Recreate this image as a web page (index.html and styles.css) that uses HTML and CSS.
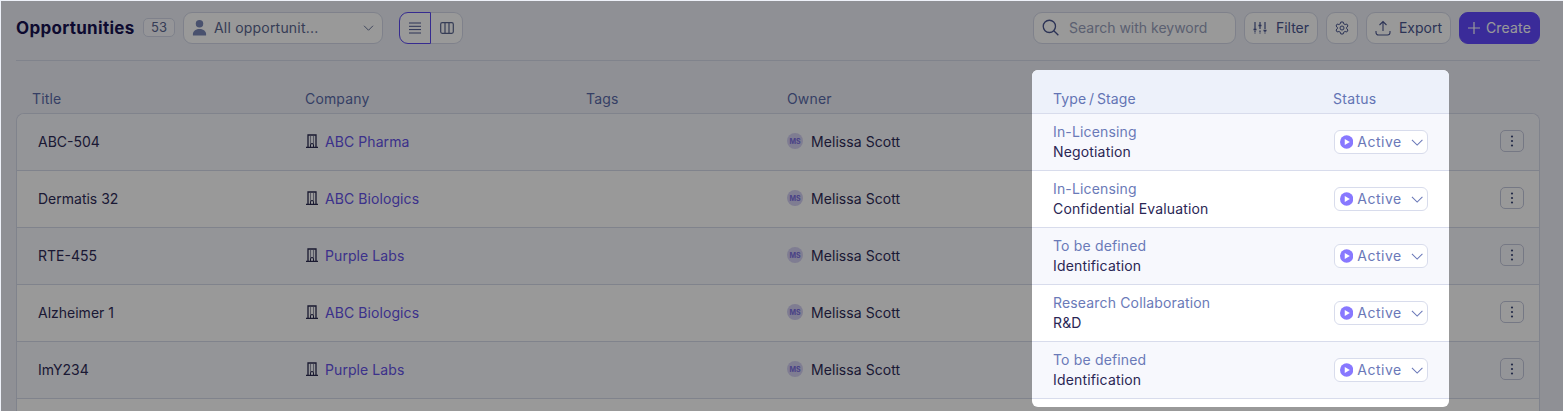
FILE: index.html
```html
<!DOCTYPE html>
<html lang="en">
<head>
<meta charset="utf-8">
<title>Opportunities</title>
<link rel="stylesheet" href="styles.css">
</head>
<body>
<svg class="sprites" width="0" height="0" aria-hidden="true">
  <symbol id="chev" viewBox="0 0 14 8"><path d="M1 1l6 6 6-6" fill="none" stroke="currentColor" stroke-width="1.2"/></symbol>
  <symbol id="bld" viewBox="0 0 12 14"><path d="M2 13V1h8v12M0 13.3h12" fill="none" stroke="currentColor" stroke-width="1.3"/><path d="M4 3h1M7 3h1M4 5h1M7 5h1M4 7h1M7 7h1M4 9h1M7 9h1" stroke="currentColor" stroke-width="1.1"/><path d="M4.5 13v-2a1.5 1.5 0 0 1 3 0v2" fill="none" stroke="currentColor"/></symbol>
  <symbol id="kebab" viewBox="0 0 4 12"><circle cx="2" cy="1.5" r="1.1" fill="currentColor"/><circle cx="2" cy="6" r="1.1" fill="currentColor"/><circle cx="2" cy="10.500" r="1.1" fill="currentColor"/></symbol>
  <symbol id="play" viewBox="0 0 14 14"><circle cx="7" cy="7" r="7" fill="#8878ff"/><path d="M5 3.800v6.400L10.400 7z" fill="#fff"/></symbol>
</svg>
<div class="page">
  <header class="toolbar">
    <h1 class="title">Opportunities</h1>
    <span class="count">53</span>
    <div class="select">
      <svg class="person" viewBox="0 0 16 18"><circle cx="8" cy="4.500" r="4"/><path d="M1 17c-.6-4.500 2.500-7 7-7s7.600 2.500 7 7z"/></svg>
      <span class="select-text">All opportunit...</span>
      <svg class="select-chev"><use href="#chev"/></svg>
    </div>
    <div class="toggle">
      <button class="toggle-btn on"><svg viewBox="0 0 14 12" class="tico"><path d="M1 1h12M1 4.300h12M1 7.600h12M1 11h12" stroke="currentColor" fill="none"/></svg></button>
      <button class="toggle-btn"><svg viewBox="0 0 14 12" class="tico"><rect x=".7" y=".7" width="12.600" height="10.600" rx="1.500" fill="none" stroke="currentColor" stroke-width="1.200"/><path d="M5 1v10M9 1v10" stroke="currentColor" stroke-width="1.200"/></svg></button>
    </div>
    <div class="spacer"></div>
    <div class="search">
      <svg class="search-ico" viewBox="0 0 18 18"><circle cx="7.800" cy="7.800" r="6.500" fill="none" stroke="currentColor" stroke-width="1.400"/><path d="M12.500 12.500l4.800 4.800" stroke="currentColor" stroke-width="1.400"/></svg>
      <span>Search with keyword</span>
    </div>
    <button class="btn filter"><svg class="ico" viewBox="0 0 14 14"><path d="M2 1v12M7 1v12M12 1v12" stroke="currentColor" stroke-width="1.200" stroke-dasharray="7 1.500 2 1"/><path d="M.5 8.500h3M5.500 4.500h3M10.500 9.500h3" stroke="currentColor" stroke-width="1.400"/></svg>Filter</button>
    <button class="btn gear"><svg class="ico" viewBox="0 0 14 14"><path d="M5.800 1h2.400l.4 1.700 1.500.8 1.700-.5 1.200 2-1.300 1.200v1.600L13 9l-1.200 2-1.700-.5-1.500.8-.4 1.700H5.800l-.4-1.700-1.500-.8-1.700.5L1 9l1.300-1.200V6.200L1 5l1.200-2 1.700.5 1.500-.8z" fill="none" stroke="currentColor"/><circle cx="7" cy="7" r="2" fill="none" stroke="currentColor"/></svg></button>
    <button class="btn export"><svg class="ico" viewBox="0 0 16 16"><path d="M8 11V2M4.500 5L8 1.500 11.500 5M1 11v1.500A2.500 2.500 0 0 0 3.500 15h9a2.500 2.500 0 0 0 2.500-2.500V11" fill="none" stroke="currentColor" stroke-width="1.100"/></svg>Export</button>
    <button class="btn create"><svg class="plus" viewBox="0 0 12 12"><path d="M6 0v12M0 6h12" stroke="currentColor" stroke-width="1.200"/></svg>Create</button>
  </header>

  <div class="cols">
    <span>Title</span><span>Company</span><span>Tags</span><span>Owner</span>
  </div>

  <section class="table">
    <div class="row"><span class="c-title">ABC-504</span><span class="c-company"><svg class="bld"><use href="#bld"/></svg><a>ABC Pharma</a></span><span class="c-tags"></span><span class="c-owner"><i class="av">MS</i>Melissa Scott</span><span class="kebab"><svg><use href="#kebab"/></svg></span></div>
    <div class="row"><span class="c-title">Dermatis 32</span><span class="c-company"><svg class="bld"><use href="#bld"/></svg><a>ABC Biologics</a></span><span class="c-tags"></span><span class="c-owner"><i class="av">MS</i>Melissa Scott</span><span class="kebab"><svg><use href="#kebab"/></svg></span></div>
    <div class="row"><span class="c-title">RTE-455</span><span class="c-company"><svg class="bld"><use href="#bld"/></svg><a>Purple Labs</a></span><span class="c-tags"></span><span class="c-owner"><i class="av">MS</i>Melissa Scott</span><span class="kebab"><svg><use href="#kebab"/></svg></span></div>
    <div class="row"><span class="c-title">Alzheimer 1</span><span class="c-company"><svg class="bld"><use href="#bld"/></svg><a>ABC Biologics</a></span><span class="c-tags"></span><span class="c-owner"><i class="av">MS</i>Melissa Scott</span><span class="kebab"><svg><use href="#kebab"/></svg></span></div>
    <div class="row"><span class="c-title">ImY234</span><span class="c-company"><svg class="bld"><use href="#bld"/></svg><a>Purple Labs</a></span><span class="c-tags"></span><span class="c-owner"><i class="av">MS</i>Melissa Scott</span><span class="kebab"><svg><use href="#kebab"/></svg></span></div>
    <div class="row"></div>
  </section>
</div>

<div class="overlay"></div>

<aside class="spot">
  <div class="spot-head"><span class="spot-type">Type / Stage</span><span>Status</span></div>
  <div class="spot-row"><div class="stack"><span class="type">In-Licensing</span><span class="stage">Negotiation</span></div><div class="pill"><svg class="play"><use href="#play"/></svg><span class="pill-label">Active</span><svg class="pill-chev"><use href="#chev"/></svg></div></div>
  <div class="spot-row"><div class="stack"><span class="type">In-Licensing</span><span class="stage">Confidential Evaluation</span></div><div class="pill"><svg class="play"><use href="#play"/></svg><span class="pill-label">Active</span><svg class="pill-chev"><use href="#chev"/></svg></div></div>
  <div class="spot-row"><div class="stack"><span class="type">To be defined</span><span class="stage">Identification</span></div><div class="pill"><svg class="play"><use href="#play"/></svg><span class="pill-label">Active</span><svg class="pill-chev"><use href="#chev"/></svg></div></div>
  <div class="spot-row"><div class="stack"><span class="type">Research Collaboration</span><span class="stage">R&amp;D</span></div><div class="pill"><svg class="play"><use href="#play"/></svg><span class="pill-label">Active</span><svg class="pill-chev"><use href="#chev"/></svg></div></div>
  <div class="spot-row"><div class="stack"><span class="type">To be defined</span><span class="stage">Identification</span></div><div class="pill"><svg class="play"><use href="#play"/></svg><span class="pill-label">Active</span><svg class="pill-chev"><use href="#chev"/></svg></div></div>
</aside>
</body>
</html>
```
FILE: styles.css
```css
* { box-sizing: border-box; }
html, body { margin: 0; height: 411px; overflow: hidden; }
body { background: #eef1f9; font-family: Inter, "Liberation Sans", sans-serif; font-size: 14px; color: #2e2b58; position: relative; }
.sprites { position: absolute; }
.page { padding: 12px 23px 0 16px; height: 411px; overflow: hidden; }
.toolbar { display: flex; align-items: center; height: 49px; padding-bottom: 17px; border-bottom: 1px solid #d6daea; }
.title { margin: 0; font-size: 17px; font-weight: 700; letter-spacing: .3px; line-height: 32px; color: #171250; width: 119px; white-space: nowrap; }
.count { margin-left: 8px; width: 32px; height: 19px; border: 1px solid #d4d8e8; border-radius: 5px; font-size: 13px; line-height: 17px; text-align: center; color: #5a6690; background: #f8f9fd; }
.select { margin-left: 8px; width: 200px; height: 32px; border: 1px solid #d4d8e8; border-radius: 9px; background: #fff; display: flex; align-items: center; padding: 0 8px; color: #5a6690; }
.person { width: 15px; height: 18px; fill: #7a88b8; margin-right: 7px; }
.select-text { flex: 1; font-size: 14px; letter-spacing: .2px; }
.select-chev { width: 11px; height: 6px; color: #5a6690; }
.toggle { margin-left: 16px; display: flex; height: 32px; }
.toggle-btn { width: 32px; padding: 0; height: 32px; border: 1px solid #d4d8e8; background: #fff; color: #5a6690; border-radius: 0 9px 9px 0; border-left: 0; display: flex; align-items: center; justify-content: center; }
.toggle-btn.on { border: 1px solid #5a48f0; border-radius: 9px 0 0 9px; color: #4a5690; }
.tico { width: 14px; height: 12px; }
.spacer { flex: 1; }
.search { width: 203px; height: 32px; border: 1px solid #d4d8e8; border-radius: 9px; background: #fff; display: flex; align-items: center; padding-left: 8px; gap: 10px; color: #98a0bc; font-size: 14px; }
.search-ico { width: 17px; height: 17px; color: #4a5690; }
.btn { margin-left: 8px; height: 32px; border: 1px solid #d4d8e8; border-radius: 9px; background: #fff; color: #4a5690; font: 14px Inter, "Liberation Sans", sans-serif; display: flex; align-items: center; justify-content: center; padding: 0; }
.ico { width: 14px; height: 14px; }
.filter { width: 74px; gap: 9px; }
.gear { width: 32px; }
.export { width: 85px; gap: 8px; }
.export .ico { width: 16px; height: 16px; }
.create { width: 81px; background: #6149ff; border-color: #6149ff; color: #fff; gap: 6px; letter-spacing: .2px; }
.plus { width: 12px; height: 12px; }

.cols { display: grid; grid-template-columns: 273px 281px 201px 1fr; padding: 23px 0 0 16px; height: 52px; align-items: center; color: #5a6aa8; font-size: 14px; letter-spacing: .15px; }
.table { border: 1px solid #d6daea; border-bottom: 0; border-radius: 8px 8px 0 0; background: #fff; }
.row { display: grid; grid-template-columns: 267px 281px 201px 1fr 24px; align-items: center; height: 57px; padding: 0 15px 2px 21px; border-bottom: 1px solid #d6daea; }
.row:nth-child(odd) { background: #f7f8fd; }
.row:first-child { border-radius: 8px 8px 0 0; }
.row:last-child { border-bottom: 0; }
.c-company { display: flex; align-items: center; gap: 7px; padding-left: 1px; letter-spacing: .08px; }
.c-company a { color: #6452e8; }
.bld { width: 12px; height: 14px; color: #2a2a50; }
.c-owner { display: flex; align-items: center; gap: 8px; letter-spacing: .07px; }
.av { width: 16px; height: 16px; border-radius: 50%; background: #d4d0f4; color: #7a6ee0; font: 700 7px Inter, sans-serif; display: flex; align-items: center; justify-content: center; }
.kebab { width: 24px; height: 22px; border: 1px solid #c4c8dc; border-radius: 5px; display: flex; align-items: center; justify-content: center; color: #3a4678; }
.kebab svg { width: 4px; height: 12px; }

.overlay { position: absolute; inset: 1px 0 0 1px; background: rgba(0, 0, 0, .4); }
.spot { position: absolute; left: 1032px; top: 70px; width: 417px; height: 337px; background: #fff; border-radius: 6px; overflow: hidden; }
.spot-head { display: grid; grid-template-columns: 280px 1fr; height: 44px; padding: 20px 0 0 21px; line-height: 17px; background: #edf1fa; color: #6374b4; border-bottom: 1px solid #d8dcec; letter-spacing: .3px; }
.spot-type { word-spacing: -1.200px; letter-spacing: .1px; }
.spot-row { display: grid; grid-template-columns: 281px 94px; align-items: center; height: 57px; padding-left: 21px; border-bottom: 1px solid #d8dcec; }
.spot-row:nth-child(even) { background: #f7f8fd; }
.stack { display: flex; flex-direction: column; gap: 3px; line-height: 17px; padding-bottom: 2px; letter-spacing: .16px; }
.type { color: #6a7ab8; }
.stage { color: #2a2654; }
.pill { height: 24px; border: 1px solid #d8dcec; border-radius: 6px; display: flex; align-items: center; padding: 0 4px 0 5px; color: #6a78b8; gap: 4px; background: #fff; }
.play { width: 14px; height: 14px; }
.pill-label { letter-spacing: .5px; padding-bottom: 2px; }
.pill-chev { width: 13px; height: 7px; margin-left: 5px; color: #6a78b8; }
```
